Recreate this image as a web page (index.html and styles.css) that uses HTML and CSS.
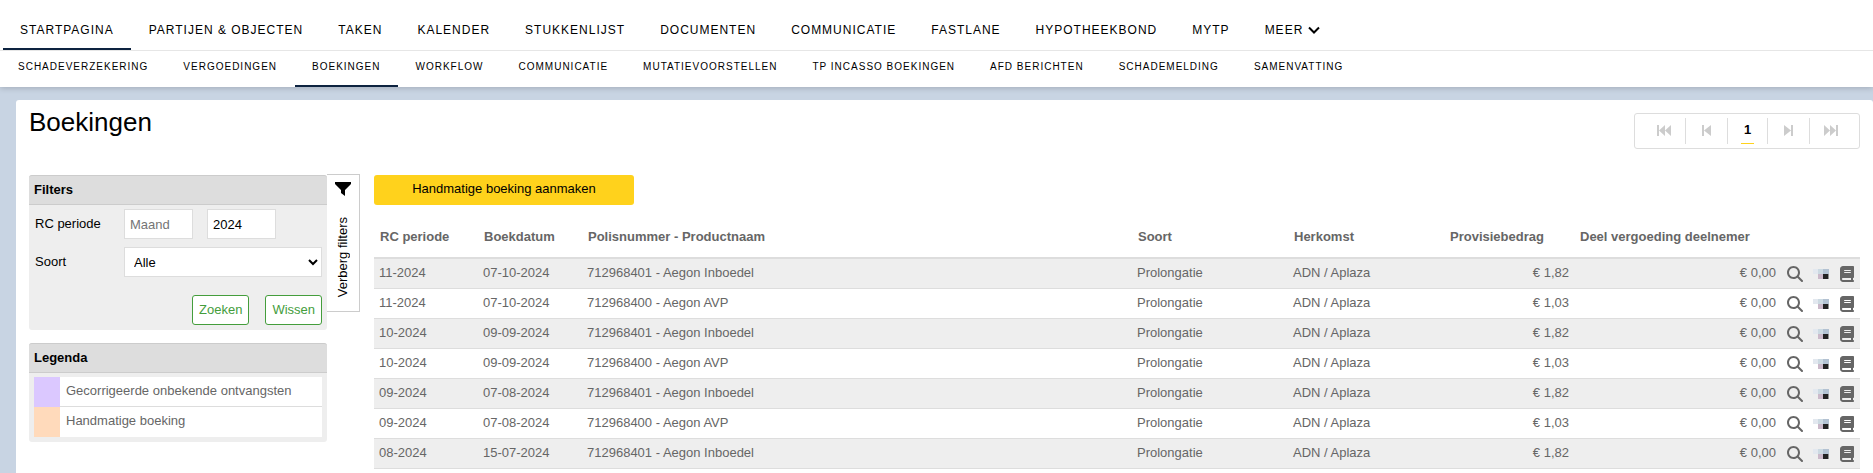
FILE: index.html
```
<!DOCTYPE html>
<html lang="nl">
<head>
    <meta charset="UTF-8">
    <meta name="viewport" content="width=device-width, initial-scale=1.0">
    <title>Boekingen</title>
    <link rel="stylesheet" href="styles.css">
</head>
<body>
    <!-- icons used more than once -->
    <svg class="icon-defs" aria-hidden="true">
        <symbol id="icon-search" viewBox="0 0 512 512">
            <path d="M416 208c0 45.900-14.900 88.300-40 122.700L502.600 457.400c12.500 12.500 12.500 32.800 0 45.300s-32.800 12.500-45.300 0L330.700 376c-34.400 25.200-76.800 40-122.700 40C93.100 416 0 322.900 0 208S93.100 0 208 0S416 93.100 416 208zM208 352a144 144 0 1 0 0-288 144 144 0 1 0 0 288z"/>
        </symbol>
        <symbol id="icon-book" viewBox="0 0 448 512">
            <path d="M96 0C43 0 0 43 0 96V416c0 53 43 96 96 96H384h32c17.700 0 32-14.300 32-32s-14.300-32-32-32V384c17.700 0 32-14.300 32-32V32c0-17.700-14.300-32-32-32H384 96zm0 384H352v64H96c-17.700 0-32-14.300-32-32s14.300-32 32-32zm32-240c0-8.800 7.200-16 16-16H336c8.800 0 16 7.200 16 16s-7.200 16-16 16H144c-8.800 0-16-7.200-16-16zm16 48H336c8.800 0 16 7.200 16 16s-7.200 16-16 16H144c-8.800 0-16-7.200-16-16s7.200-16 16-16z"/>
        </symbol>
        <symbol id="icon-blocks" viewBox="0 0 16 16">
            <path fill="#e3e8ef" d="M0 3h5v5H0z"/>
            <path fill="#ccdae2" d="M5 3h5v5H5z"/>
            <path fill="#b3c2d2" d="M10 3h6v5h-6z"/>
            <path fill="#cbb9ca" d="M5 8h5v5H5z"/>
            <path fill="#222222" d="M10 8h5v5h-5z"/>
            <path fill="#8f8f8f" d="M15 8h1v5h-1z"/>
        </symbol>
    </svg>

    <header class="header">
        <nav class="main-nav" aria-label="Hoofdmenu">
            <a class="active" href="#">STARTPAGINA</a>
            <a href="#">PARTIJEN &amp; OBJECTEN</a>
            <a href="#">TAKEN</a>
            <a href="#">KALENDER</a>
            <a href="#">STUKKENLIJST</a>
            <a href="#">DOCUMENTEN</a>
            <a href="#">COMMUNICATIE</a>
            <a href="#">FASTLANE</a>
            <a href="#">HYPOTHEEKBOND</a>
            <a href="#">MYTP</a>
            <a href="#">MEER <svg class="chevron" viewBox="0 0 12 8"><path d="M1 1.500l5 5 5-5" fill="none" stroke="currentColor" stroke-width="2"/></svg></a>
        </nav>
        <nav class="sub-nav" aria-label="Submenu">
            <a href="#">SCHADEVERZEKERING</a>
            <a href="#">VERGOEDINGEN</a>
            <a class="active" href="#">BOEKINGEN</a>
            <a href="#">WORKFLOW</a>
            <a href="#">COMMUNICATIE</a>
            <a href="#">MUTATIEVOORSTELLEN</a>
            <a href="#">TP INCASSO BOEKINGEN</a>
            <a href="#">AFD BERICHTEN</a>
            <a href="#">SCHADEMELDING</a>
            <a href="#">SAMENVATTING</a>
        </nav>
    </header>

    <main class="page">
        <div class="page-head">
            <h1>Boekingen</h1>
            <nav class="pager" aria-label="Paginering">
                <button type="button" aria-label="Eerste pagina" disabled><svg width="14" height="11" viewBox="0 0 14 11"><path d="M0 0h2v11H0zM2 5.500L8 0v11zM8 5.500L14 0v11z"/></svg></button>
                <button type="button" aria-label="Vorige pagina" disabled><svg width="9" height="11" viewBox="0 0 9 11"><path d="M0 0h2v11H0zM2 5.500L9 0v11z"/></svg></button>
                <button type="button" class="current"><span>1</span></button>
                <button type="button" aria-label="Volgende pagina" disabled><svg width="9" height="11" viewBox="0 0 9 11"><path d="M7 0h2v11H7zM7 5.500L0 0v11z"/></svg></button>
                <button type="button" aria-label="Laatste pagina" disabled><svg width="14" height="11" viewBox="0 0 14 11"><path d="M12 0h2v11h-2zM12 5.500L6 0v11zM6 5.500L0 0v11z"/></svg></button>
            </nav>
        </div>

        <div class="columns">
            <aside class="sidebar">
                <div class="panels">
                    <form class="panel">
                        <h2>Filters</h2>
                        <div class="fields">
                            <label for="maand">RC periode</label>
                            <div class="period">
                                <input type="text" id="maand" placeholder="Maand">
                                <input type="text" id="jaar" value="2024" aria-label="Jaar">
                            </div>
                            <label for="soort">Soort</label>
                            <select id="soort">
                                <option>Alle</option>
                            </select>
                        </div>
                        <div class="actions">
                            <button type="submit">Zoeken</button>
                            <button type="reset">Wissen</button>
                        </div>
                    </form>

                    <section class="panel">
                        <h2>Legenda</h2>
                        <ul class="legend">
                            <li><span class="swatch purple"></span><span class="name">Gecorrigeerde onbekende ontvangsten</span></li>
                            <li><span class="swatch orange"></span><span class="name">Handmatige boeking</span></li>
                        </ul>
                    </section>
                </div>
                <button type="button" class="filter-toggle">
                    <svg width="16" height="14" viewBox="0 0 16 14"><path d="M0 0h16v2L10 8v6L6 11V8L0 2z"/></svg>
                    <span>Verberg filters</span>
                </button>
            </aside>

            <section class="content">
                <button type="button" class="create">Handmatige boeking aanmaken</button>
                <table>
                    <thead>
                        <tr>
                            <th class="col-period">RC periode</th>
                            <th class="col-date">Boekdatum</th>
                            <th>Polisnummer - Productnaam</th>
                            <th class="col-type">Soort</th>
                            <th class="col-type">Herkomst</th>
                            <th class="col-amount">Provisiebedrag</th>
                            <th class="col-share">Deel vergoeding deelnemer</th>
                            <th class="col-tools"></th>
                        </tr>
                    </thead>
                    <tbody>
                        <tr>
                            <td>11-2024</td><td>07-10-2024</td><td>712968401 - Aegon Inboedel</td><td>Prolongatie</td><td>ADN / Aplaza</td>
                            <td class="money">€ 1,82</td><td class="money">€ 0,00</td>
                            <td><div class="tools"><a href="#" aria-label="Bekijken"><svg><use href="#icon-search"/></svg></a><a href="#" aria-label="Maatschappij"><svg><use href="#icon-blocks"/></svg></a><a href="#" aria-label="Boeking"><svg><use href="#icon-book"/></svg></a></div></td>
                        </tr>
                        <tr>
                            <td>11-2024</td><td>07-10-2024</td><td>712968400 - Aegon AVP</td><td>Prolongatie</td><td>ADN / Aplaza</td>
                            <td class="money">€ 1,03</td><td class="money">€ 0,00</td>
                            <td><div class="tools"><a href="#" aria-label="Bekijken"><svg><use href="#icon-search"/></svg></a><a href="#" aria-label="Maatschappij"><svg><use href="#icon-blocks"/></svg></a><a href="#" aria-label="Boeking"><svg><use href="#icon-book"/></svg></a></div></td>
                        </tr>
                        <tr>
                            <td>10-2024</td><td>09-09-2024</td><td>712968401 - Aegon Inboedel</td><td>Prolongatie</td><td>ADN / Aplaza</td>
                            <td class="money">€ 1,82</td><td class="money">€ 0,00</td>
                            <td><div class="tools"><a href="#" aria-label="Bekijken"><svg><use href="#icon-search"/></svg></a><a href="#" aria-label="Maatschappij"><svg><use href="#icon-blocks"/></svg></a><a href="#" aria-label="Boeking"><svg><use href="#icon-book"/></svg></a></div></td>
                        </tr>
                        <tr>
                            <td>10-2024</td><td>09-09-2024</td><td>712968400 - Aegon AVP</td><td>Prolongatie</td><td>ADN / Aplaza</td>
                            <td class="money">€ 1,03</td><td class="money">€ 0,00</td>
                            <td><div class="tools"><a href="#" aria-label="Bekijken"><svg><use href="#icon-search"/></svg></a><a href="#" aria-label="Maatschappij"><svg><use href="#icon-blocks"/></svg></a><a href="#" aria-label="Boeking"><svg><use href="#icon-book"/></svg></a></div></td>
                        </tr>
                        <tr>
                            <td>09-2024</td><td>07-08-2024</td><td>712968401 - Aegon Inboedel</td><td>Prolongatie</td><td>ADN / Aplaza</td>
                            <td class="money">€ 1,82</td><td class="money">€ 0,00</td>
                            <td><div class="tools"><a href="#" aria-label="Bekijken"><svg><use href="#icon-search"/></svg></a><a href="#" aria-label="Maatschappij"><svg><use href="#icon-blocks"/></svg></a><a href="#" aria-label="Boeking"><svg><use href="#icon-book"/></svg></a></div></td>
                        </tr>
                        <tr>
                            <td>09-2024</td><td>07-08-2024</td><td>712968400 - Aegon AVP</td><td>Prolongatie</td><td>ADN / Aplaza</td>
                            <td class="money">€ 1,03</td><td class="money">€ 0,00</td>
                            <td><div class="tools"><a href="#" aria-label="Bekijken"><svg><use href="#icon-search"/></svg></a><a href="#" aria-label="Maatschappij"><svg><use href="#icon-blocks"/></svg></a><a href="#" aria-label="Boeking"><svg><use href="#icon-book"/></svg></a></div></td>
                        </tr>
                        <tr>
                            <td>08-2024</td><td>15-07-2024</td><td>712968401 - Aegon Inboedel</td><td>Prolongatie</td><td>ADN / Aplaza</td>
                            <td class="money">€ 1,82</td><td class="money">€ 0,00</td>
                            <td><div class="tools"><a href="#" aria-label="Bekijken"><svg><use href="#icon-search"/></svg></a><a href="#" aria-label="Maatschappij"><svg><use href="#icon-blocks"/></svg></a><a href="#" aria-label="Boeking"><svg><use href="#icon-book"/></svg></a></div></td>
                        </tr>
                    </tbody>
                </table>
            </section>
        </div>
    </main>
</body>
</html>
```
FILE: styles.css
```
* {
    box-sizing: border-box;
}

body {
    margin: 0;
    min-height: 100vh;
    display: flex;
    flex-direction: column;
    background: #c8d4e3;
    color: #000;
    font-family: "Liberation Sans", Arial, sans-serif;
    font-size: 13px;
    line-height: 16px;
}

button, input, select {
    font: inherit;
    color: inherit;
}

button {
    cursor: pointer;
}

.icon-defs {
    display: none;
}

/* navigation */
.header {
    background: #fff;
    box-shadow: 0 1px 6px rgba(0, 0, 0, 0.2);
}

.main-nav, .sub-nav {
    display: flex;
    gap: 1px;
}

.main-nav {
    padding: 12px 0 0 3px;
    border-bottom: 1px solid #e6e6e6;
}

.sub-nav {
    padding-left: 1px;
}

.main-nav a, .sub-nav a {
    color: #000;
    text-decoration: none;
    letter-spacing: 1px;
    white-space: nowrap;
    border-bottom: 2px solid transparent;
}

.main-nav a {
    padding: 10px 17px;
    font-size: 12px;
}

.sub-nav a {
    padding: 9px 17px 11px;
    font-size: 10px;
    line-height: 14px;
}

.main-nav .active, .sub-nav .active {
    border-bottom-color: #0d2340;
}

.chevron {
    width: 12px;
    height: 8px;
}

/* page */
.page {
    flex: 1;
    margin: 13px 0 0 16px;
    padding: 8px 13px 0;
    background: #fff;
    border-radius: 3px 3px 0 0;
}

.page-head {
    display: flex;
    justify-content: space-between;
    align-items: flex-start;
    height: 67px;
}

h1 {
    margin: 0;
    font-size: 26px;
    font-weight: normal;
    line-height: 28px;
}

.pager {
    display: flex;
    margin-top: 5px;
    padding: 4px 7px;
    border: 1px solid #ddd;
    border-radius: 3px;
}

.pager button {
    display: flex;
    justify-content: center;
    width: 42px;
    height: 26px;
    padding: 7px 0 0;
    border: 0;
    border-left: 1px solid #ddd;
    background: none;
    fill: #ccc;
}

.pager button:first-child, .pager button:last-child {
    width: 43px;
}

.pager button:first-child {
    border-left: 0;
}

.pager .current {
    width: 40px;
    padding: 4px 0 0;
    font-weight: bold;
}

.pager .current span {
    width: 13px;
    height: 22px;
    border-bottom: 1px solid #ffd21c;
}

.columns {
    display: flex;
    align-items: flex-start;
    gap: 14px;
}

/* filters and legend */
.sidebar {
    display: flex;
    align-items: flex-start;
    flex: 0 0 331px;
}

.panels {
    flex: 1;
    display: flex;
    flex-direction: column;
    gap: 13px;
}

.panel {
    background: #eee;
    border-radius: 3px;
}

.panel h2 {
    margin: 0;
    padding: 6px 5px;
    border: 1px solid #ccc;
    border-width: 1px 0;
    border-radius: 3px 3px 0 0;
    background: #ddd;
    font-size: 13px;
}

.fields {
    display: grid;
    grid-template-columns: 88px 1fr;
    gap: 8px 2px;
    padding: 4px 5px 12px;
}

.fields label {
    padding: 7px 0 0 1px;
}

.period {
    display: flex;
    gap: 14px;
}

.period input, .fields select {
    height: 30px;
    border: 1px solid #ddd;
    border-radius: 0;
    background: #fff;
}

.period input {
    width: 69px;
    padding: 0 5px;
}

.fields select {
    padding: 0 5px;
}

.actions {
    display: flex;
    justify-content: flex-end;
    gap: 16px;
    padding: 6px 5px 5px;
}

.actions button {
    height: 30px;
    padding: 0 6px 1px;
    border: 1px solid #449d3c;
    border-radius: 3px;
    background: #fff;
    color: #449d3c;
}

.filter-toggle {
    display: flex;
    flex-direction: column;
    align-items: center;
    gap: 21px;
    width: 33px;
    height: 138px;
    margin-top: -1px;
    padding: 7px 0 0;
    border: 1px solid #ccc;
    border-left: 0;
    background: #fff;
}

.filter-toggle span {
    writing-mode: vertical-rl;
    transform: rotate(180deg);
}

.legend {
    margin: 0;
    padding: 4px 5px 5px;
    list-style: none;
}

.legend li {
    display: flex;
    height: 30px;
    background: #fff;
    color: #666;
}

.swatch {
    width: 26px;
}

.purple {
    background: #dbc8ff;
}

.orange {
    background: #ffdabb;
}

.legend .name {
    flex: 1;
    padding: 6px;
}

.legend li:first-child .name {
    border-bottom: 1px solid #ddd;
}

/* bookings */
.content {
    flex: 1;
}

.create {
    display: block;
    width: 260px;
    height: 30px;
    padding: 0 0 3px;
    border: 0;
    border-radius: 3px;
    background: #ffd21c;
}

table {
    width: 100%;
    margin-top: 10px;
    border-collapse: separate;
    border-spacing: 0;
    table-layout: fixed;
    color: #666;
}

th {
    height: 44px;
    padding: 1px 6px 0;
    border-bottom: 2px solid #ddd;
    text-align: left;
    white-space: nowrap;
}

td {
    height: 30px;
    padding: 0 5px 1px;
    border-bottom: 1px solid #ddd;
}

tbody tr:nth-child(odd) {
    background: #eee;
}

.col-period, .col-date {
    width: 104px;
}

.col-type {
    width: 156px;
}

.col-amount {
    width: 130px;
}

.col-share {
    width: 207px;
}

.col-tools {
    width: 79px;
}

.money {
    text-align: right;
}

.tools {
    display: flex;
    gap: 10px;
    padding: 1px 0 0 1px;
}

.tools svg {
    display: block;
    width: 16px;
    height: 16px;
    fill: #666;
}
```
